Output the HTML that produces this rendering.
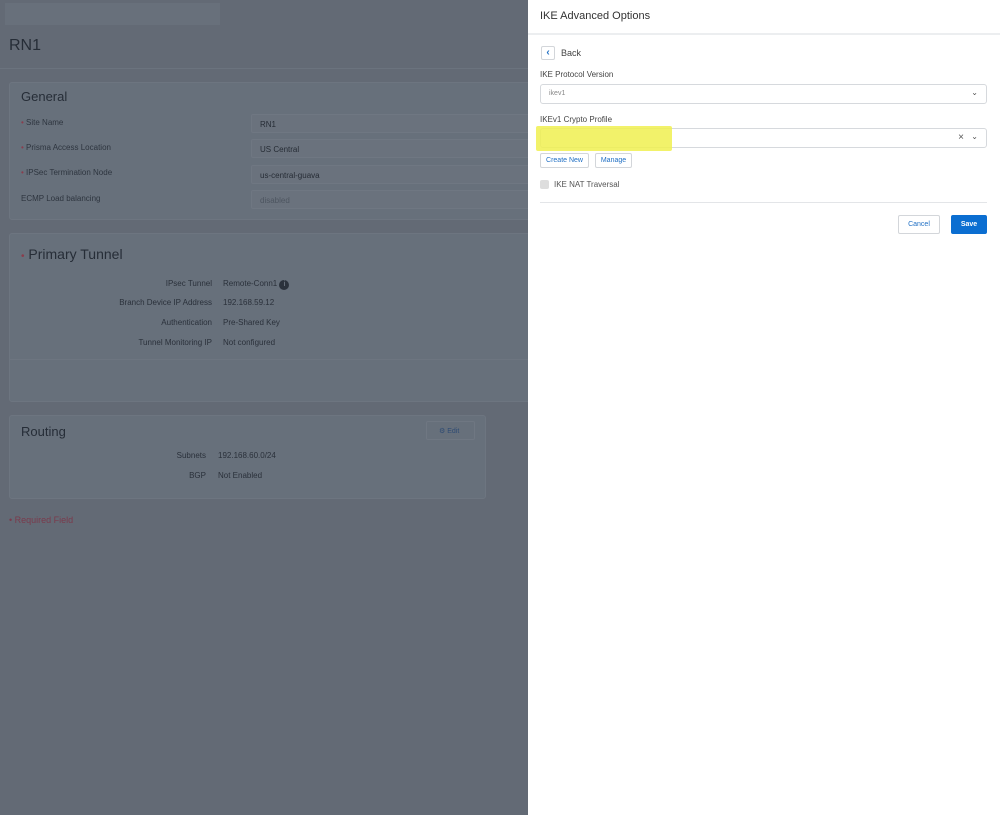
<!DOCTYPE html>
<html><head><meta charset="utf-8"><style>
*{box-sizing:border-box;margin:0;padding:0}
body{width:1000px;height:815px;overflow:hidden;font-family:"Liberation Sans",sans-serif;background:#636a75;position:relative}
.a{position:absolute}
.l{color:#2e353f;font-size:8px}
.card{position:absolute;background:#67707b;border:1px solid #6d7580;border-radius:3px}
.inp{position:absolute;background:#6a727d;border:1px solid #6f7782;border-radius:2px;height:19px;font-size:8px;color:#262c35;padding:5px 8px}
.st{color:#8a3c4c}
.r{position:absolute;font-size:8px;color:#2a303a}
.p{position:absolute;background:#fff;left:528px;top:0;width:472px;height:815px}
.pi{position:absolute;border:1px solid #d6d9dd;border-radius:3px;height:20px;background:#fff}
.btn{position:absolute;border:1px solid #d3d6da;border-radius:2px;font-size:7px;color:#1f6fc4;background:#fff;text-align:center}
</style></head><body>
<div class="a" style="left:5px;top:3px;width:215px;height:22px;background:#68707b"></div>
<div class="a" style="left:9px;top:37px;font-size:16px;color:#262d37">RN1</div>
<div class="a" style="left:0;top:68px;width:528px;height:1px;background:#6b737e"></div>

<div class="card" style="left:9px;top:82px;width:530px;height:138px"></div>
<div class="a" style="left:21px;top:89px;font-size:13px;color:#262d37">General</div>
<div class="a l" style="left:21px;top:118px"><span class="st">•</span> Site Name</div>
<div class="a l" style="left:21px;top:143px"><span class="st">•</span> Prisma Access Location</div>
<div class="a l" style="left:21px;top:168px"><span class="st">•</span> IPSec Termination Node</div>
<div class="a l" style="left:21px;top:194px">ECMP Load balancing</div>
<div class="inp" style="left:251px;top:114px;width:290px">RN1</div>
<div class="inp" style="left:251px;top:139px;width:290px">US Central</div>
<div class="inp" style="left:251px;top:165px;width:290px">us-central-guava</div>
<div class="inp" style="left:251px;top:190px;width:290px;color:#4d5560">disabled</div>

<div class="card" style="left:9px;top:233px;width:530px;height:169px"></div>
<div class="a" style="left:9px;top:359px;width:519px;height:1px;background:#6d7580"></div>
<div class="a" style="left:21px;top:246px;font-size:14px;color:#262d37"><span class="st" style="font-size:10px">•</span> Primary Tunnel</div>
<div class="r" style="right:788px;top:279px">IPsec Tunnel</div><div class="r" style="left:223px;top:279px">Remote-Conn1 <span style="display:inline-block;width:10px;height:10px;border-radius:50%;background:#2b323c;color:#67707b;font-size:7px;text-align:center;line-height:10px;font-weight:bold">i</span></div>
<div class="r" style="right:788px;top:298px">Branch Device IP Address</div><div class="r" style="left:223px;top:298px">192.168.59.12</div>
<div class="r" style="right:788px;top:318px">Authentication</div><div class="r" style="left:223px;top:318px">Pre-Shared Key</div>
<div class="r" style="right:788px;top:338px">Tunnel Monitoring IP</div><div class="r" style="left:223px;top:338px">Not configured</div>

<div class="card" style="left:9px;top:415px;width:477px;height:84px"></div>
<div class="a" style="left:21px;top:424px;font-size:13px;color:#262d37">Routing</div>
<div class="a" style="left:426px;top:421px;width:49px;height:19px;border:1px solid #6f7782;border-radius:2px;font-size:7px;color:#2e4b73;padding:5px 0 0 12px">⚙ Edit</div>
<div class="r" style="right:794px;top:451px">Subnets</div><div class="r" style="left:218px;top:451px">192.168.60.0/24</div>
<div class="r" style="right:794px;top:471px">BGP</div><div class="r" style="left:218px;top:471px">Not Enabled</div>
<div class="a" style="left:9px;top:515px;font-size:9px;color:#7a3a4c">• Required Field</div>

<div class="p">
<div class="a" style="left:12px;top:10px;font-size:11px;color:#333">IKE Advanced Options</div>
<div class="a" style="left:0;top:33px;width:472px;height:2px;background:#eceef0"></div>
<div class="a" style="left:13px;top:46px;width:14px;height:14px;border:1px solid #d3d6da;border-radius:2px;color:#1f6fc4;font-size:10px;font-weight:bold;text-align:center;line-height:12px">‹</div>
<div class="a" style="left:33px;top:48px;font-size:9px;color:#444">Back</div>
<div class="a" style="left:12px;top:70px;font-size:8px;color:#444">IKE Protocol Version</div>
<div class="pi" style="left:12px;top:84px;width:447px"><span class="a" style="left:8px;top:5px;font-size:7px;color:#888">ikev1</span><span class="a" style="right:8px;top:3px;font-size:8px;color:#555">⌄</span></div>
<div class="a" style="left:12px;top:115px;font-size:8px;color:#444">IKEv1 Crypto Profile</div>
<div class="pi" style="left:12px;top:128px;width:447px"><span class="a" style="right:22px;top:3px;font-size:10px;color:#555">×</span><span class="a" style="right:8px;top:3px;font-size:8px;color:#555">⌄</span></div>
<div class="a" style="left:8px;top:126px;width:136px;height:25px;background:#f0f050;opacity:.85;border-radius:2px"></div>
<div class="btn" style="left:12px;top:153px;width:49px;height:15px;line-height:13px">Create New</div>
<div class="btn" style="left:67px;top:153px;width:37px;height:15px;line-height:13px">Manage</div>
<div class="a" style="left:12px;top:180px;width:9px;height:9px;background:#ddd;border-radius:2px"></div>
<div class="a" style="left:26px;top:180px;font-size:8px;color:#555">IKE NAT Traversal</div>
<div class="a" style="left:12px;top:202px;width:447px;height:1px;background:#e3e5e8"></div>
<div class="btn" style="left:370px;top:215px;width:42px;height:19px;line-height:17px">Cancel</div>
<div class="btn" style="left:423px;top:215px;width:36px;height:19px;line-height:17px;background:#0b6ed1;color:#fff;border-color:#0b6ed1;font-weight:bold">Save</div>
</div>
</body></html>
